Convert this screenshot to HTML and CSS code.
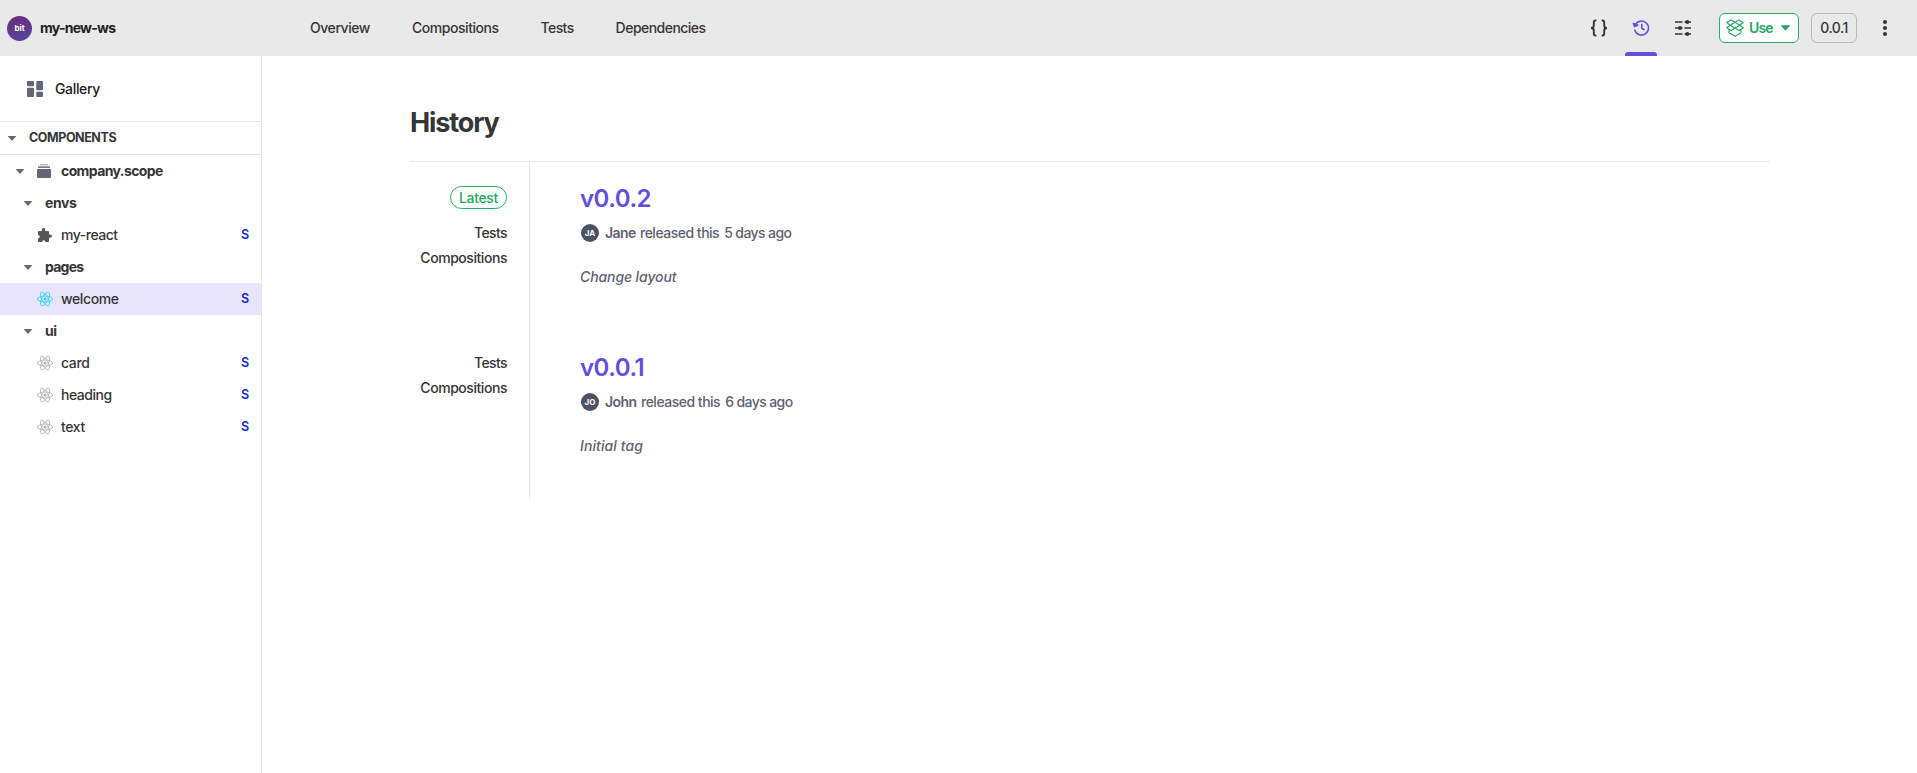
FILE: index.html
```html
<!DOCTYPE html>
<html lang="en">
<head>
<meta charset="utf-8">
<title>my-new-ws</title>
<link rel="stylesheet" href="styles.css">
</head>
<body>
<svg class="defs" width="0" height="0">
  <symbol id="react" viewBox="0 0 16 16">
    <g fill="none" stroke="currentColor" stroke-width=".8">
      <ellipse cx="8" cy="8" rx="7.6" ry="3"/>
      <ellipse cx="8" cy="8" rx="7.6" ry="3" transform="rotate(60 8 8)"/>
      <ellipse cx="8" cy="8" rx="7.6" ry="3" transform="rotate(120 8 8)"/>
    </g>
    <circle cx="8" cy="8" r="1.5" fill="currentColor"/>
  </symbol>
  <symbol id="caret" viewBox="0 0 8 5"><path d="M.6 0h6.8q.9 0 .4.7L4.6 4.3q-.6.6-1.2 0L.2.7Q-.3 0 .6 0z" fill="currentColor"/></symbol>
</svg>
<header class="topbar">
  <div class="workspace"><span class="logo">bit</span><span class="ws-name">my-new-ws</span></div>
  <nav class="tabs">
    <a class="t-overview">Overview</a><a class="t-compositions">Compositions</a><a class="t-tests">Tests</a><a class="t-dependencies">Dependencies</a>
  </nav>
  <div class="tools">
    <a class="tool"><svg width="18" height="18" viewBox="0 0 18 18" fill="none" stroke="currentColor" stroke-width="1.9"><path d="M6.300 1.500h-.7Q3.800 1.500 3.800 3.500v3Q3.800 9 1 9q2.800 0 2.800 2.500v3q0 2 1.800 2h.7M11.700 1.500h.7q1.800 0 1.800 2v3Q14.200 9 17 9q-2.800 0-2.800 2.500v3q0 2-1.800 2h-.7"/></svg></a>
    <a class="tool active"><svg width="18" height="18" viewBox="0 0 18 18" fill="none" stroke="currentColor" stroke-width="1.6" stroke-linecap="round" stroke-linejoin="round"><path d="M3.100 6.200A7 7 0 1 1 2.800 11.200M9.800 5.200v4l2.400 1.500"/><path d="M1.400 4.400l1.200 3 3.300-1.100z" fill="currentColor"/></svg></a>
    <a class="tool"><svg width="18" height="18" viewBox="0 0 18 18" fill="none" stroke="currentColor" stroke-width="1.700"><path d="M1 3h7.500M10.500 3H17M1 9h7.500M10.500 9H17M1 15h7.500M10.500 15H17"/><g fill="currentColor" stroke="none"><circle cx="13.300" cy="3" r="2"/><circle cx="6" cy="9" r="2"/><circle cx="13.300" cy="15" r="2"/></g></svg></a>
    <button class="use"><svg width="18" height="18" viewBox="0 0 18 18" fill="none" stroke="currentColor" stroke-width="1.100" stroke-linejoin="round"><path d="M5 1 9 3.300 4.300 6.200.700 3.500zM13 1 9 3.300l4.700 2.900 3.600-2.700zM4.300 6.200 9 9.200l-4 2.300L.7 8.700zM13.700 6.200 9 9.200l4 2.300 4.300-2.800zM3 10.500v3.300L9 17.200l6-3.400v-3.300"/></svg><span>Use</span><svg class="use-caret" width="9" height="6"><use href="#caret"/></svg></button>
    <button class="version-btn"><span>0.0.1</span></button>
    <svg class="more" width="4" height="16" viewBox="0 0 4 16"><circle cx="2" cy="2" r="2"/><circle cx="2" cy="8" r="2"/><circle cx="2" cy="14" r="2"/></svg>
  </div>
</header>
<div class="layout">
  <aside class="sidebar">
    <a class="gallery"><svg width="16" height="16" viewBox="0 0 16 16" fill="currentColor"><rect width="7" height="5.200" rx="1"/><rect y="6.800" width="7" height="9.200" rx="1"/><rect x="9.300" width="6.700" height="9.200" rx="1"/><rect x="9.300" y="10.800" width="6.700" height="5.200" rx="1"/></svg><span>Gallery</span></a>
    <div class="section"><svg class="caret" width="8" height="5"><use href="#caret"/></svg><span>COMPONENTS</span></div>
    <div class="row scope"><svg class="caret" width="8" height="5"><use href="#caret"/></svg><svg class="stack" width="14" height="14" viewBox="0 0 14 14" fill="currentColor"><rect x="3" width="8" height="1.300" rx=".4" opacity=".5"/><rect x="1" y="2.300" width="12" height="1.700" rx=".5" opacity=".85"/><rect y="5" width="14" height="9" rx="1"/></svg><span>company.scope</span></div>
    <div class="row folder"><svg class="caret" width="8" height="5"><use href="#caret"/></svg><span class="t-envs">envs</span></div>
    <div class="row item"><svg class="puzzle" width="16" height="16" viewBox="0 0 16 16" fill="currentColor"><path d="M2 4h2.800V2.600a1.700 1.700 0 0 1 3.400 0V4H11q1 0 1 1v2.400h1.200a1.700 1.700 0 0 1 0 3.400H12V14q0 1-1 1H8.200c0-2.200-3-2.200-3 0H2q-1 0-1-1v-2.600c2.400 0 2.400-3.400 0-3.400V5q0-1 1-1z"/></svg><span class="t-myreact">my-react</span><b>S</b></div>
    <div class="row folder"><svg class="caret" width="8" height="5"><use href="#caret"/></svg><span class="t-pages">pages</span></div>
    <div class="row item selected"><svg class="react" width="16" height="16"><use href="#react"/></svg><span class="t-welcome">welcome</span><b>S</b></div>
    <div class="row folder"><svg class="caret" width="8" height="5"><use href="#caret"/></svg><span>ui</span></div>
    <div class="row item"><svg class="react" width="16" height="16"><use href="#react"/></svg><span>card</span><b>S</b></div>
    <div class="row item"><svg class="react" width="16" height="16"><use href="#react"/></svg><span class="t-heading">heading</span><b>S</b></div>
    <div class="row item"><svg class="react" width="16" height="16"><use href="#react"/></svg><span>text</span><b>S</b></div>
  </aside>
  <main class="content">
    <h1><span>History</span></h1>
    <section class="release">
      <div class="links"><span class="latest"><span>Latest</span></span><a class="t-tests">Tests</a><a class="t-compositions">Compositions</a></div>
      <div class="details"><h2><span>v0.0.2</span></h2><p class="author"><span class="avatar">JA</span><span class="name">Jane</span><span class="released">released this</span><span class="when">5 days ago</span></p><p class="message"><span>Change layout</span></p></div>
    </section>
    <section class="release">
      <div class="links"><a class="t-tests">Tests</a><a class="t-compositions">Compositions</a></div>
      <div class="details"><h2><span>v0.0.1</span></h2><p class="author"><span class="avatar">JO</span><span class="name john">John</span><span class="released">released this</span><span class="when">6 days ago</span></p><p class="message"><span class="initial">Initial tag</span></p></div>
    </section>
  </main>
</div>
</body>
</html>
```

FILE: styles.css
```css
* { box-sizing: border-box; }
body {
  margin: 0;
  height: 100vh;
  display: flex;
  flex-direction: column;
  overflow: hidden;
  background: #fff;
  color: #363636;
  font: 500 14px/20px Inter, "Liberation Sans", sans-serif;
}
svg { display: block; flex: none; }
.defs { position: absolute; }
h1, h2, p { margin: 0; }
button { font: inherit; margin: 0; padding: 0; }

.topbar { height: 56px; flex: none; display: flex; align-items: center; background: #e9e9e9; }
.workspace { width: 310px; padding-left: 7px; display: flex; align-items: center; gap: 8px; }
.logo {
  width: 25px; height: 25px; border-radius: 50%;
  display: flex; align-items: center; justify-content: center;
  background: linear-gradient(#6d2b7f, #55459a);
  color: #fff; font-size: 8px; font-weight: 700; line-height: 10px;
}
.ws-name { font-weight: 700; color: #222; letter-spacing: -.75px; }
.tabs { display: flex; gap: 42px; }
.t-overview { letter-spacing: -.45px; }
.t-compositions { letter-spacing: -.45px; }
.t-tests { letter-spacing: -.6px; }
.t-dependencies { letter-spacing: -.53px; }
.tools { margin-left: auto; padding-right: 30px; display: flex; align-items: center; height: 56px; }
.tool { width: 32px; height: 56px; margin-right: 10px; display: flex; align-items: center; justify-content: center; }
.tool.active { color: #6250dc; position: relative; }
.tool.active::after { content: ""; position: absolute; left: 0; right: 0; bottom: 0; height: 4px; border-radius: 3px 3px 0 0; background: #6250dc; }
.use {
  width: 80px; height: 30px; margin: 0 12px 0 10px; padding-left: 6px;
  display: flex; align-items: center;
  border: 1px solid #25b065; border-radius: 6px; background: #fff; color: #25a862; font-weight: 600;
}
.use span { margin-left: 5px; width: 32px; text-align: left; letter-spacing: -.9px; }
.version-btn { width: 46px; height: 30px; border: 1px solid #b5b6c0; border-radius: 6px; background: transparent; color: #363636; }
.version-btn span { letter-spacing: -.5px; }
.more { margin-left: 26px; fill: #363636; }

.layout { flex: 1; display: flex; min-height: 0; }
.sidebar { width: 262px; flex: none; border-right: 1px solid #e5e5e6; }
.gallery { height: 65px; padding-left: 27px; display: flex; align-items: center; gap: 12px; color: #222; letter-spacing: -.35px; }
.gallery svg { color: #636674; }
.section { height: 34px; border-top: 1px solid #e9e9e9; border-bottom: 1px solid #e9e9e9; padding-left: 8px; display: flex; align-items: center; gap: 13px; font-size: 12.5px; font-weight: 700; }
.section span { letter-spacing: -.43px; }
.caret { color: #636674; }
.row { height: 32px; display: flex; align-items: center; }
.scope { padding-left: 16px; font-weight: 700; letter-spacing: -.6px; }
.stack { margin: 0 10px 0 13px; color: #636674; }
.folder { padding-left: 24px; gap: 13px; font-weight: 700; letter-spacing: -.4px; }
.item { padding-left: 37px; padding-right: 12px; letter-spacing: -.38px; }
.item span { margin-left: 8px; }
.t-pages { letter-spacing: -.75px; }
.t-myreact, .t-heading { letter-spacing: -.48px; }
.item b { margin-left: auto; width: 8px; font-weight: 600; font-size: 12.5px; letter-spacing: 0; color: #1628d3; }
.puzzle { color: #555; }
.react { color: #b0b0b0; }
.selected { background: #e9e5fd; }
.selected .react { color: #1cd2f8; }

.content { flex: 1; padding: 0 147px 0 148px; }
h1 { height: 106px; padding-top: 51px; border-bottom: 1px solid #e7e7e7; font-size: 27px; line-height: 32px; font-weight: 700; color: #363636; }
h1 span { letter-spacing: -1.1px; }
.release { height: 168.5px; display: flex; }
.links { width: 120px; padding: 24px 22px 0 0; border-right: 1px solid #e5e5e6; display: flex; flex-direction: column; align-items: flex-end; }
.links a { height: 25px; line-height: 20px; }
.links .t-tests:first-child { margin-top: -2px; }
.latest { height: 23px; width: 57px; margin-bottom: 14px; border: 1px solid #25b065; border-radius: 12px; color: #25a862; line-height: 21px; text-align: center; letter-spacing: -.35px; }
.details { padding: 21px 0 0 50px; }
h2 { font-size: 24px; line-height: 32px; font-weight: 600; letter-spacing: -.5px; color: #6250dc; }
.author { height: 20px; margin-top: 8px; display: flex; align-items: center; color: #5f6270; white-space: nowrap; }
.avatar { width: 18px; height: 18px; margin: 0 6px 0 1px; border-radius: 50%; background: #4a5364; color: #fff; display: flex; align-items: center; justify-content: center; font-size: 8px; font-weight: 700; }
.name { width: 35px; font-weight: 600; letter-spacing: -.6px; }
.john { width: 36px; }
.released { letter-spacing: -.5px; }
.when { margin-left: 5px; letter-spacing: -.6px; }
.message { margin-top: 24px; font-style: italic; letter-spacing: -.1px; color: #5f6270; }
.initial { letter-spacing: .1px; }
```
